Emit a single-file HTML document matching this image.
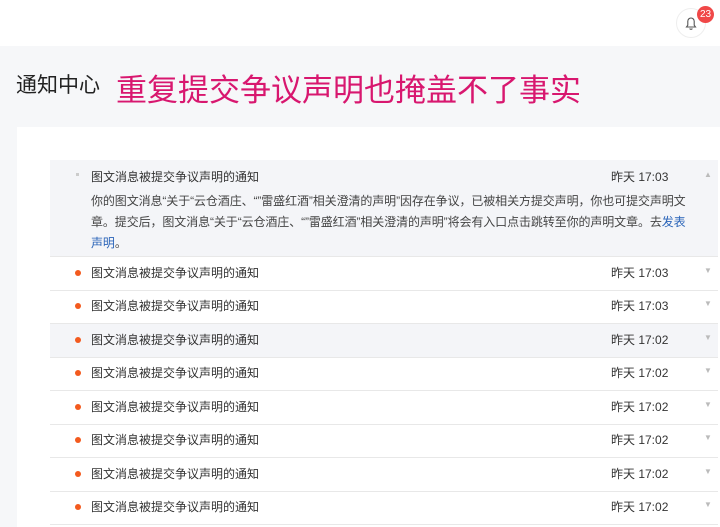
<!DOCTYPE html><html><head><meta charset="utf-8"><style>
body{margin:0;width:720px;height:520px;overflow:hidden;background:#f6f7f9;font-family:"Liberation Sans","Noto Sans CJK SC",sans-serif;position:relative}
.hdr{position:absolute;left:0;top:0;width:720px;height:46px;background:#fff}
.bell{position:absolute;left:676px;top:8px;width:28px;height:28px;border-radius:50%;border:1px solid #eee;background:#fff}
.badge{position:absolute;left:697px;top:6px;width:17px;height:17px;border-radius:50%;background:#f04848;color:#fff;font-size:10px;line-height:17px;text-align:center}
.t1{position:absolute;left:16px;top:69px;font-size:21px;color:#222}
.t2{position:absolute;left:116px;top:65px;font-size:31px;color:#d8176f}
.card{position:absolute;left:17px;top:127px;width:703px;height:400px;background:#fff}
.row{position:absolute;left:50px;width:668px;height:33px;border-bottom:1px solid #e8e8e8;font-size:12px;color:#333}
.row .d{position:absolute;left:25px;top:13px;width:6px;height:6px;border-radius:50%;background:#f35a1e}
.row .tx{position:absolute;left:41px;top:7px}
.row .tm{position:absolute;left:561px;top:7px;font-size:12px}
.row .ar{position:absolute;left:654px;top:9px;color:#bbb;font-size:8px}
.exp{position:absolute;left:50px;top:160px;width:668px;height:96px;background:#f4f5f8;border-bottom:1px solid #e8e8e8;font-size:12px;color:#333}
</style></head><body>
<div class="hdr"></div>
<div class="bell"><svg width="28" height="28" viewBox="0 0 28 28"><path d="M9.5 18h9l-1.3-1.8v-4a3.2 3.2 0 0 0-6.4 0v4zM12.7 19.5a1.4 1.4 0 0 0 2.6 0" fill="none" stroke="#555" stroke-width="1.1"/></svg></div>
<div class="badge">23</div>
<div class="t1">通知中心</div>
<div class="t2">重复提交争议声明也掩盖不了事实</div>
<div class="card"></div>
<div class="exp">
<div style="position:absolute;left:26px;top:13px;width:3px;height:3px;background:#ccc"></div>
<div style="position:absolute;left:41px;top:8px">图文消息被提交争议声明的通知</div>
<div style="position:absolute;left:561px;top:8px;font-size:12px">昨天 17:03</div>
<div style="position:absolute;left:654px;top:10px;color:#bbb;font-size:8px">▲</div>
<div style="position:absolute;left:41px;top:31px;width:600px;line-height:21px;color:#444;letter-spacing:-0.1px">你的图文消息“关于“云仓酒庄、“”雷盛红酒”相关澄清的声明”因存在争议，已被相关方提交声明，你也可提交声明文章。提交后，图文消息“关于“云仓酒庄、“”雷盛红酒”相关澄清的声明”将会有入口点击跳转至你的声明文章。去<span style="color:#2a64b8">发表声明</span>。</div>
</div>
<div class="row" style="top:257px"><i class="d"></i><span class="tx">图文消息被提交争议声明的通知</span><span class="tm">昨天 17:03</span><span class="ar">▼</span></div>
<div class="row" style="top:290px"><i class="d"></i><span class="tx">图文消息被提交争议声明的通知</span><span class="tm">昨天 17:03</span><span class="ar">▼</span></div>
<div class="row" style="top:324px;background:#f4f5f8"><i class="d"></i><span class="tx">图文消息被提交争议声明的通知</span><span class="tm">昨天 17:02</span><span class="ar">▼</span></div>
<div class="row" style="top:357px"><i class="d"></i><span class="tx">图文消息被提交争议声明的通知</span><span class="tm">昨天 17:02</span><span class="ar">▼</span></div>
<div class="row" style="top:391px"><i class="d"></i><span class="tx">图文消息被提交争议声明的通知</span><span class="tm">昨天 17:02</span><span class="ar">▼</span></div>
<div class="row" style="top:424px"><i class="d"></i><span class="tx">图文消息被提交争议声明的通知</span><span class="tm">昨天 17:02</span><span class="ar">▼</span></div>
<div class="row" style="top:458px"><i class="d"></i><span class="tx">图文消息被提交争议声明的通知</span><span class="tm">昨天 17:02</span><span class="ar">▼</span></div>
<div class="row" style="top:491px"><i class="d"></i><span class="tx">图文消息被提交争议声明的通知</span><span class="tm">昨天 17:02</span><span class="ar">▼</span></div>
</body></html>
